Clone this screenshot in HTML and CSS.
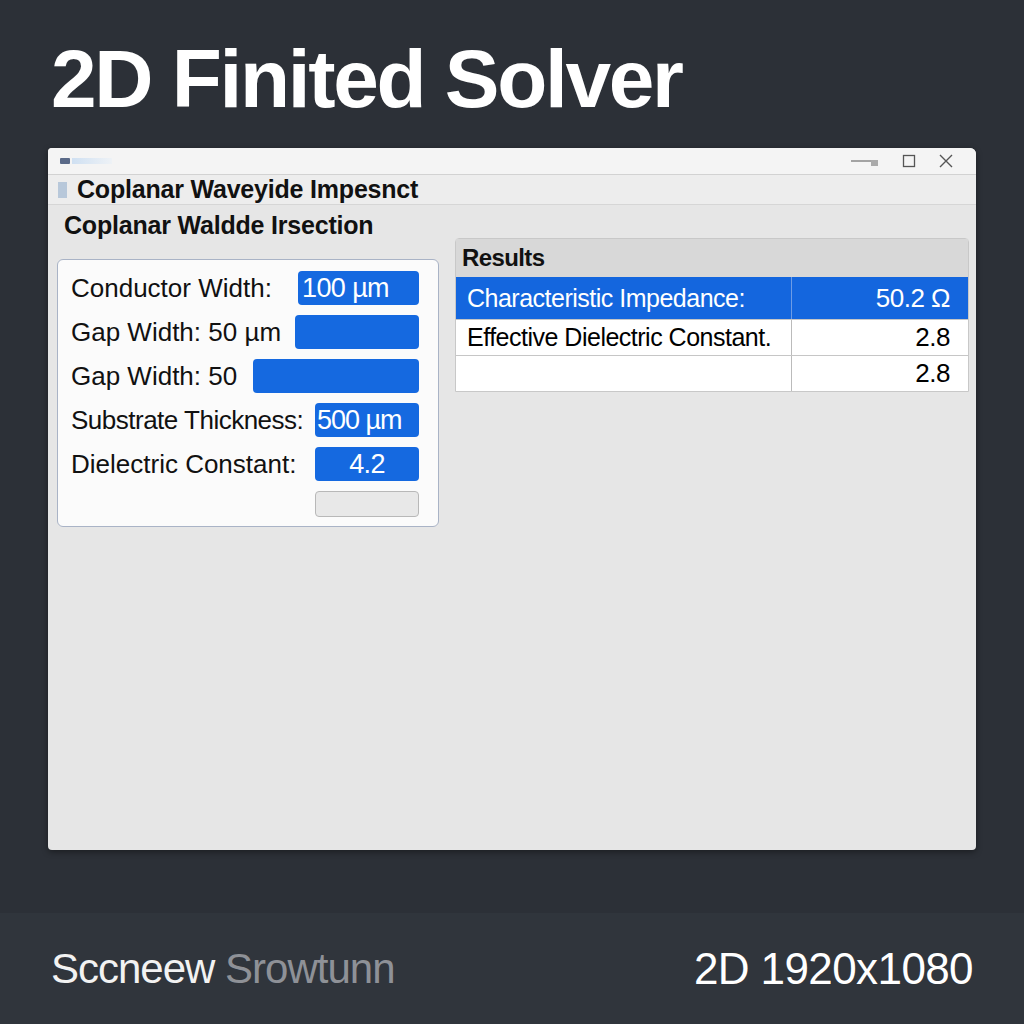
FILE: index.html
```html
<!DOCTYPE html>
<html>
<head>
<meta charset="utf-8">
<link rel="stylesheet" href="styles.css">
</head>
<body>
<div class="page">
  <h1 class="title">2D Finited Solver</h1>
  <div class="window">
    <div class="titlebar">
      <div class="app-icon"><span class="ico"></span><span class="ico-bar"></span></div>
      <div class="controls">
        <svg width="30" height="12" viewBox="0 0 30 12"><path d="M1 6H22" stroke="#777" stroke-width="1.3"/><rect x="21" y="5" width="7" height="6" fill="#aaa"/></svg>
        <svg width="14" height="14" viewBox="0 0 14 14"><rect x="1.5" y="1.5" width="11" height="11" fill="none" stroke="#555" stroke-width="1.3"/></svg>
        <svg width="16" height="16" viewBox="0 0 16 16"><path d="M2 2L14 14M14 2L2 14" stroke="#555" stroke-width="1.4"/></svg>
      </div>
    </div>
    <div class="menu-row"><span class="menu-sq"></span><span class="menu-text">Coplanar Waveyide Impesnct</span></div>
    <div class="subtitle">Coplanar Waldde Irsection</div>
    <div class="content">
      <div class="panel">
        <div class="row"><span class="lbl">Conductor Width:</span><span class="inp w1">100 µm</span></div>
        <div class="row"><span class="lbl">Gap Width: 50 µm</span><span class="inp w2"></span></div>
        <div class="row"><span class="lbl">Gap Width: 50</span><span class="inp w3"></span></div>
        <div class="row"><span class="lbl tight">Substrate Thickness:</span><span class="inp w4">500 µm</span></div>
        <div class="row"><span class="lbl">Dielectric Constant:</span><span class="inp w5 center">4.2</span></div>
        <div class="row btnrow"><span class="btn"></span></div>
      </div>
      <div class="results">
        <div class="res-head">Results</div>
        <div class="res-row sel"><span class="c1">Characteristic Impedance:</span><span class="c2">50.2 Ω</span></div>
        <div class="res-row"><span class="c1">Effective Dielectric Constant.</span><span class="c2">2.8</span></div>
        <div class="res-row"><span class="c1"></span><span class="c2">2.8</span></div>
      </div>
    </div>
  </div>
  <div class="footer">
    <span class="foot-left"><span class="fw">Sccneew</span> <span class="fg">Srowtunn</span></span>
    <span class="foot-right">2D 1920x1080</span>
  </div>
</div>
</body>
</html>
```
FILE: styles.css
```css
* { box-sizing: border-box; }
html, body { margin: 0; padding: 0; }
body {
  width: 1024px; height: 1024px; overflow: hidden;
  background: #2c3037;
  font-family: "Liberation Sans", Arial, sans-serif;
}
.page { display: flex; flex-direction: column; height: 1024px; }
.title {
  margin: 0; padding: 38px 0 0 51px;
  height: 148px;
  font-size: 82px; font-weight: bold; color: #fff;
  line-height: 1; letter-spacing: -2.3px;
}
.window {
  margin-left: 48px; width: 928px; height: 702px;
  background: #e6e6e6;
  border-radius: 4px 6px 4px 4px;
  display: flex; flex-direction: column;
  box-shadow: 0 2px 6px rgba(0,0,0,0.4);
}
.titlebar {
  height: 27px; background: #f4f4f4;
  border-bottom: 1px solid #d2d2d2;
  border-radius: 4px 6px 0 0;
  display: flex; align-items: center; justify-content: space-between;
  padding: 0 22px 0 12px;
}
.app-icon { display: flex; align-items: center; gap: 2px; }
.ico { width: 10px; height: 6px; background: #5a6a88; border-radius: 1px; }
.ico-bar { width: 40px; height: 6px; background: linear-gradient(90deg, #cfe0f2, #eef2f6); }
.controls { display: flex; align-items: center; gap: 22px; }
.menu-row {
  height: 30px; background: #ededed;
  border-bottom: 1px solid #d6d6d6;
  display: flex; align-items: center; gap: 10px; padding-left: 10px;
}
.menu-sq { width: 9px; height: 16px; background: #b8c8da; }
.menu-text { font-size: 25px; font-weight: bold; color: #111; letter-spacing: -0.2px; }
.subtitle {
  padding: 6px 0 0 16px; height: 36px;
  font-size: 25px; font-weight: bold; color: #111; letter-spacing: -0.2px;
}
.content { display: flex; align-items: flex-start; padding-left: 9px; }
.panel {
  margin-top: 18px;
  width: 382px; height: 268px;
  background: #fbfbfb;
  border: 1.5px solid #a9b3c6;
  border-radius: 6px;
  padding: 11px 19px 0 13px;
  display: flex; flex-direction: column; gap: 10px;
}
.row { display: flex; justify-content: space-between; align-items: center; height: 34px; }
.lbl { font-size: 26px; color: #111; letter-spacing: 0; white-space: nowrap; }
.lbl.tight { letter-spacing: -0.5px; }
.inp {
  height: 34px; background: #1569e0; border-radius: 4px;
  color: #fff; font-size: 27px;
  display: flex; align-items: center; padding-left: 4px; letter-spacing: -0.6px;
}
.inp.center { justify-content: center; padding-left: 0; }
.w1 { width: 121px; }
.w2 { width: 124px; }
.w3 { width: 166px; }
.w4 { width: 104px; padding-left: 2px; letter-spacing: -1px; }
.w5 { width: 104px; }
.btnrow { justify-content: flex-end; height: 26px; }
.btn { width: 104px; height: 26px; background: #e8e8e8; border: 1px solid #b8b8b8; border-radius: 4px; }
.results {
  margin-left: 16px; margin-top: -3px;
  width: 514px;
  border: 1px solid #c8c8c8; border-radius: 4px 4px 0 0;
  background: #fff;
}
.res-head {
  height: 38px; background: #d8d8d8;
  font-size: 24px; font-weight: bold; color: #111;
  padding: 5px 0 0 6px; letter-spacing: -0.6px;
}
.res-row { display: flex; height: 36px; border-top: 1px solid #c6c6c6; }
.res-row.sel { height: 42px; background: #1466de; color: #fff; border-top: none; }
.c1 {
  width: 336px; border-right: 1px solid #bbb;
  font-size: 25px; padding-left: 11px; display: flex; align-items: center;
  letter-spacing: -0.5px; white-space: nowrap; overflow: hidden;
}
.sel .c1 { border-right: 1px solid #6d9ce6; }
.c2 {
  flex: 1; font-size: 26px; display: flex; align-items: center; justify-content: flex-end;
  padding-right: 18px; letter-spacing: -0.5px;
}
.footer {
  margin-top: auto; height: 111px;
  background: #30353c;
  display: flex; align-items: center; justify-content: space-between;
  padding: 0 51px 0 51px;
}
.foot-left { font-size: 42px; letter-spacing: -1px; }
.fw { color: #f2f2f2; }
.fg { color: #8e9197; }
.foot-right { font-size: 44px; color: #fff; letter-spacing: -0.6px; }
```
